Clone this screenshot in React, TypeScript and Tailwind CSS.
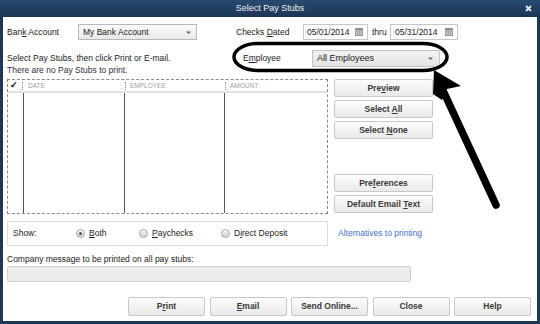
import React from "react";

const U = ({ c }: { c: string }) => <span className="underline underline-offset-1">{c}</span>;

const Arrow = () => (
  <svg width="7" height="5" viewBox="0 0 7 5" className="shrink-0">
    <path d="M1 1.5 L3.5 4 L6 1.5 Z" fill="#666" />
  </svg>
);

const Cal = () => (
  <svg width="8" height="8" viewBox="0 0 8 8" className="shrink-0">
    <rect x="0.5" y="0.5" width="7" height="7" fill="#d8d8d8" stroke="#9a9a9a" />
    <rect x="0.5" y="0.5" width="7" height="2" fill="#8a8a8a" />
    <path d="M1 4 H7 M1 6 H7 M3 3 V7.5 M5 3 V7.5" stroke="#9a9a9a" strokeWidth="0.7" />
  </svg>
);

const Btn = ({ children, w = "w-full", h = "h-[18px]" }: { children: React.ReactNode; w?: string; h?: string }) => (
  <div
    className={`${w} ${h} flex items-center justify-center rounded-[2px] border border-[#c9c9c9] bg-gradient-to-b from-[#fdfdfd] to-[#e9e9e9] font-bold text-[#3a3a3a] text-[8.5px]`}
  >
    <span>{children}</span>
  </div>
);

const Radio = ({ checked }: { checked?: boolean }) => (
  <div className="w-[9px] h-[9px] rounded-full border border-[#a8a8a8] bg-gradient-to-b from-[#f6f6f6] to-[#d2d2d2] flex items-center justify-center shrink-0">
    {checked && <div className="w-[3px] h-[3px] rounded-full bg-[#555]" />}
  </div>
);

const Sep = () => <div className="w-0 h-[8px] border-l border-dotted border-[#9a9a9a]" />;

export default function App() {
  return (
    <div
      className="relative w-[540px] h-[324px] bg-[#1d3758] flex flex-col px-[3px] pb-[3px] text-[8.5px] text-[#222]"
      style={{ fontFamily: '"Liberation Sans", Arial, sans-serif' }}
    >
      {/* Title bar */}
      <div className="relative h-[17px] flex items-center justify-center text-[#f0f0f0] text-[9px] bg-gradient-to-b from-[#294a70] to-[#1c3556] -mx-[3px]">
        Select Pay Stubs
        <svg width="7" height="7" viewBox="0 0 7 7" className="absolute right-[8px] top-[5px]">
          <path d="M1 1 L6 6 M6 1 L1 6" stroke="#e4e4e4" strokeWidth="1.8" />
        </svg>
      </div>

      {/* Content */}
      <div className="flex-1 bg-white flex flex-col pl-[4px] pr-[6px]">
        {/* Row 1 */}
        <div className="mt-[7px] h-[16px] flex items-center">
          <span className="w-[71px]">
            Ban<U c="k" /> Account
          </span>
          <div className="w-[119px] h-[16px] border border-[#b8b8b8] bg-gradient-to-b from-[#fbfbfb] to-[#e9e9e9] flex items-center justify-between pl-[4px] pr-[4px]">
            <span>My Bank Account</span>
            <Arrow />
          </div>
          <span className="ml-[39px] w-[67px]">
            Checks <U c="D" />ated
          </span>
          <div className="w-[65px] h-[16px] border border-[#c6c6c6] bg-white flex items-center justify-between pl-[3px] pr-[4px]">
            <span>05/01/2014</span>
            <Cal />
          </div>
          <span className="ml-[4px] w-[18px]">thru</span>
          <div className="w-[68px] h-[16px] border border-[#c6c6c6] bg-white flex items-center justify-between pl-[4px] pr-[4px]">
            <span>05/31/2014</span>
            <Cal />
          </div>
        </div>

        {/* Row 2 */}
        <div className="mt-[10px] flex">
          <div className="w-[236px] pt-[2px] leading-[12px]">
            <div>Select Pay Stubs, then click Print or E-mail.</div>
            <div className="text-[#2e2a45]">There are no Pay Stubs to print.</div>
          </div>
          <div className="w-[69px] h-[17px] flex items-center">
            <span>
              E<U c="m" />ployee
            </span>
          </div>
          <div className="w-[128px] h-[17px] border border-[#c4c4c4] bg-gradient-to-b from-[#f2f2f2] to-[#e4e4e4] flex items-center justify-between pl-[4px] pr-[5px] text-[9px]">
            <span>All Employees</span>
            <Arrow />
          </div>
        </div>

        {/* Main: table + buttons */}
        <div className="mt-[3px] flex">
          <div className="w-[321px] h-[135px] border border-dashed border-[#8a8a8a] flex flex-col">
            <div className="h-[13px] flex items-center border-b-2 border-[#e2e2e2] text-[6.5px] text-[#a0a0a0]">
              <div className="w-[16px] flex items-center justify-between pl-[2px] pr-[1px]">
                <span className="text-[9px] font-bold text-black leading-none">✓</span>
                <Sep />
              </div>
              <div className="w-[101px] flex items-center pl-[4px]">DATE</div>
              <div className="w-[100px] flex items-center gap-[4px]">
                <Sep />
                <span>EMPLOYEE</span>
              </div>
              <div className="flex-1 flex items-center gap-[4px]">
                <Sep />
                <span>AMOUNT</span>
              </div>
            </div>
            <div className="flex-1 flex">
              <div className="w-[16px] border-r border-[#555]" />
              <div className="w-[101px] border-r border-[#555]" />
              <div className="w-[100px] border-r border-[#555]" />
              <div className="flex-1" />
            </div>
          </div>
          <div className="ml-[6px] w-[99px] flex flex-col gap-[3px]">
            <Btn>
              Pre<U c="v" />iew
            </Btn>
            <Btn>
              Select <U c="A" />ll
            </Btn>
            <Btn>
              Select <U c="N" />one
            </Btn>
            <div className="h-[29px]" />
            <Btn>
              Pre<U c="f" />erences
            </Btn>
            <Btn>
              Default Email <U c="T" />ext
            </Btn>
          </div>
        </div>

        {/* Show row */}
        <div className="mt-[7px] flex items-center">
          <div className="w-[321px] h-[25px] border border-[#dedede] flex items-center pl-[5px]">
            <span className="w-[63px]">Show:</span>
            <div className="w-[63px] flex items-center gap-[4px]">
              <Radio checked />
              <span>
                <U c="B" />oth
              </span>
            </div>
            <div className="w-[82px] flex items-center gap-[4px]">
              <Radio />
              <span>
                <U c="P" />aychecks
              </span>
            </div>
            <div className="flex items-center gap-[4px]">
              <Radio />
              <span>
                D<U c="i" />rect Deposit
              </span>
            </div>
          </div>
          <span className="ml-[10px] text-[#3f6fd2]">Alternatives to printing</span>
        </div>

        {/* Company message */}
        <div className="mt-[8px] leading-[10px]">Company message to be printed on all pay stubs:</div>
        <div className="mt-[2px] w-[404px] h-[16px] rounded-[2px] border border-[#cfcfcf] bg-[#ececec]" />

        {/* Bottom buttons */}
        <div className="mt-[15px] flex justify-end gap-[4.5px]">
          <Btn w="w-[77px]" h="h-[19px]">
            P<U c="r" />int
          </Btn>
          <Btn w="w-[77px]" h="h-[19px]">
            <U c="E" />mail
          </Btn>
          <Btn w="w-[77px]" h="h-[19px]">
            Send Online...
          </Btn>
          <Btn w="w-[77px]" h="h-[19px]">
            Close
          </Btn>
          <Btn w="w-[77px]" h="h-[19px]">
            Help
          </Btn>
        </div>
      </div>

      {/* Annotation overlay */}
      <svg className="absolute left-0 top-0 pointer-events-none" width="540" height="324" viewBox="0 0 540 324">
        <rect x="234" y="43.5" width="213" height="27" rx="24" ry="13.5" fill="none" stroke="#000" strokeWidth="3.5" />
        <line x1="496" y1="205" x2="440" y2="84" stroke="#000" strokeWidth="7.5" strokeLinecap="round" />
        <polygon points="434,70 461,86 447,89 442,100 433,94" fill="#000" />
      </svg>
    </div>
  );
}
